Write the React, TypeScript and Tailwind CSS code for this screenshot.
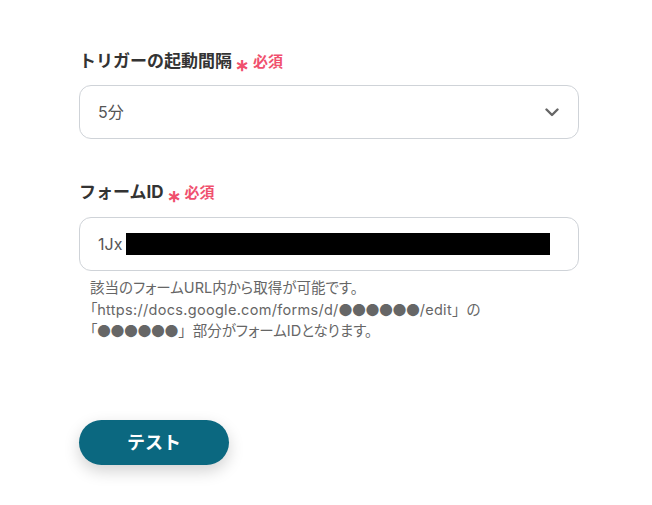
import React from "react";

const Required = () => (
  <span className="ml-[3px] inline-flex items-center text-[#f0506e]">
    <span className="text-[17px] font-bold leading-none relative top-[3px]">∗</span>
    <span className="ml-[4px] text-[15px] font-bold">必須</span>
  </span>
);

const Dots = () => (
  <span
    className="text-[13.5px] [font-feature-settings:normal]"
    style={{ fontFamily: '"Noto Sans CJK JP", sans-serif' }}
  >
    ●●●●●●
  </span>
);

const Close = () => <span className="[font-feature-settings:normal]">」</span>;

export default function App() {
  return (
    <div
      className="w-[652px] h-[505px] bg-white pl-[79px] pt-[50px]"
      style={{ fontFamily: '"Inter", "Noto Sans CJK JP", sans-serif' }}
    >
      <div className="w-[500px]">
        <div className="flex items-center h-[24px] text-[17px] font-bold text-[#333333]">
          トリガーの起動間隔
          <Required />
        </div>
        <div className="mt-[11px] h-[54px] rounded-[12px] border border-[#cfd3d8] flex items-center justify-between pl-[18px] pr-[19px]">
          <span className="text-[16px] text-[#555555]">5分</span>
          <svg width="14" height="9" viewBox="0 0 14 9" fill="none">
            <path d="M1.5 1.5 L7 7 L12.5 1.5" stroke="#666666" strokeWidth="2.4" strokeLinecap="round" strokeLinejoin="round" />
          </svg>
        </div>

        <div className="mt-[42px] flex items-center h-[24px] text-[17px] font-bold text-[#333333]">
          フォームID
          <Required />
        </div>
        <div className="mt-[12px] h-[54px] rounded-[12px] border border-[#cfd3d8] flex items-center pl-[18px]">
          <span className="text-[16px] text-[#555555]">1Jx</span>
          <div className="ml-[4px] w-[424px] h-[22px] bg-black" />
        </div>
        <div className="mt-[7px] ml-[11px] text-[14.5px] leading-[20.5px] text-[#666666] [font-feature-settings:'palt']">
          <div>該当のフォームURL内から取得が可能です。</div>
          <div>
            「<span className="tracking-[0.3px]">https://docs.google.com/forms/d/</span>
            <Dots />
            <span className="tracking-[0.3px]">/edit</span>
            <Close />の
          </div>
          <div>
            「<Dots />
            <Close />部分がフォームIDとなります。
          </div>
        </div>

        <button className="mt-[78px] w-[150px] h-[45px] rounded-full bg-[#0b6880] text-white text-[18px] font-bold shadow-[0_6px_16px_rgba(0,0,0,0.18)] flex items-center justify-center">
          テスト
        </button>
      </div>
    </div>
  );
}
